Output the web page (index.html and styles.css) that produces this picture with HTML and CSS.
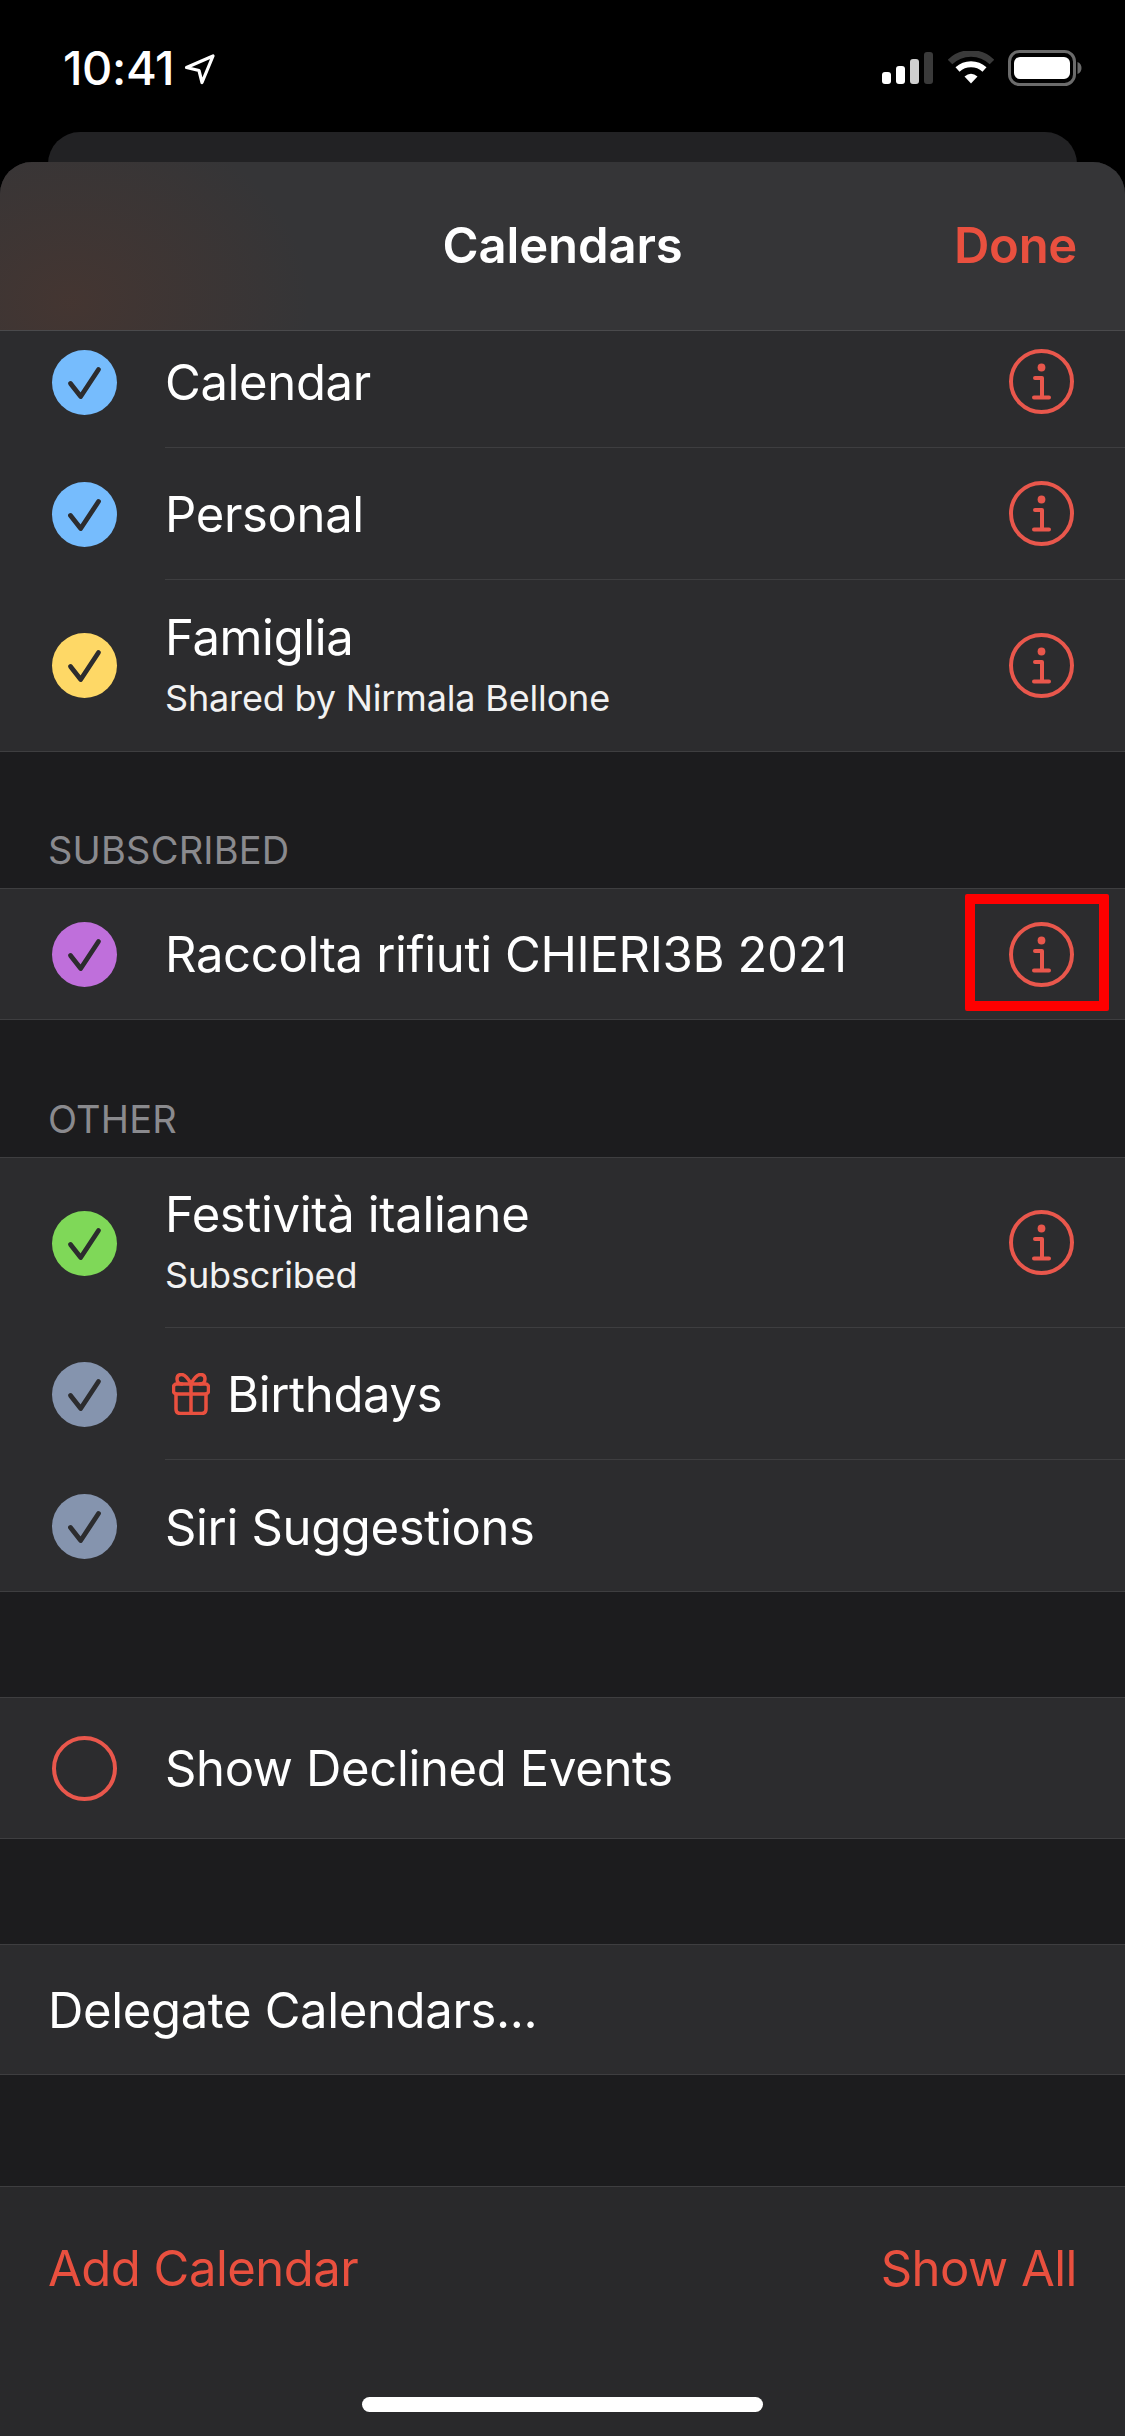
FILE: index.html
```html
<!DOCTYPE html>
<html lang="en">
<head>
<meta charset="utf-8">
<title>Calendars</title>
<link rel="stylesheet" href="styles.css">
</head>
<body>
<svg class="defs" width="0" height="0" aria-hidden="true">
  <symbol id="check" viewBox="0 0 65 65"><path d="M18.500 33.500 L28.700 46.500 L46.500 19.500" fill="none" stroke="#2c2c2e" stroke-width="4.800" stroke-linecap="round" stroke-linejoin="round"/></symbol>
  <symbol id="info" viewBox="0 0 65 65">
    <circle cx="32.500" cy="32.500" r="30.500" fill="none" stroke="currentColor" stroke-width="4"/>
    <circle cx="32.500" cy="18.500" r="3.900" fill="currentColor"/>
    <path d="M26 29 H33 V48 M25 48.500 H40" fill="none" stroke="currentColor" stroke-width="4" stroke-linecap="round" stroke-linejoin="round"/>
  </symbol>
</svg>
<div class="screen">
  <header class="status">
    <div class="status-left">
      <span class="time">10:41</span>
      <svg class="loc" width="32" height="32" viewBox="0 0 32 32"><path d="M2.500 14.500 L29 3 L18 29.500 L15 17.500 Z" fill="none" stroke="#fff" stroke-width="3.200" stroke-linejoin="round"/></svg>
    </div>
    <div class="status-right">
      <svg width="52" height="34" viewBox="0 0 52 34">
        <rect x="0" y="21" width="9" height="12" rx="3" fill="#fff"/>
        <rect x="14" y="15" width="9" height="18" rx="3" fill="#fff"/>
        <rect x="28" y="8" width="9" height="25" rx="3" fill="#cfcfcf"/>
        <rect x="42" y="1" width="9" height="32" rx="3" fill="#3a3a3a"/>
      </svg>
      <svg width="46" height="34" viewBox="0 0 46 34">
        <path d="M2 11 A30 30 0 0 1 44 11" fill="none" stroke="#3a3a3a" stroke-width="6.500"/>
        <path d="M9.500 18.500 A20 20 0 0 1 36.500 18.500" fill="none" stroke="#fff" stroke-width="6"/>
        <path d="M16.500 25.500 Q23 20 29.500 25.500 L23 32.500 Z" fill="#fff"/>
      </svg>
      <svg width="74" height="36" viewBox="0 0 74 36">
        <rect x="1.500" y="1.500" width="65" height="33" rx="10" fill="none" stroke="#6b6b6b" stroke-width="3"/>
        <rect x="6" y="7" width="56" height="22" rx="6" fill="#fff"/>
        <path d="M69.500 12 C72.500 13 73.500 15.500 73.500 18 C73.500 20.500 72.500 23 69.500 24 Z" fill="#6b6b6b"/>
      </svg>
    </div>
  </header>

  <div class="back-sheet"></div>

  <main class="sheet">
    <div class="nav">
      <h1 class="nav-title">Calendars</h1>
      <span class="nav-done">Done</span>
    </div>

    <div class="list">
      <section class="group group-first">
        <div class="row row-clipped">
          <div class="dot"><svg class="mark mark-blue"><use href="#check"/></svg></div>
          <div class="body"><span class="title">Calendar</span><svg class="info"><use href="#info"/></svg></div>
        </div>
        <div class="row">
          <div class="dot"><svg class="mark mark-blue"><use href="#check"/></svg></div>
          <div class="body"><span class="title">Personal</span><svg class="info"><use href="#info"/></svg></div>
        </div>
        <div class="row row-shared">
          <div class="dot"><svg class="mark mark-yellow"><use href="#check"/></svg></div>
          <div class="body">
            <div class="stack"><span class="title">Famiglia</span><span class="sub">Shared by Nirmala Bellone</span></div>
            <svg class="info"><use href="#info"/></svg>
          </div>
        </div>
      </section>

      <div class="label label-sub">SUBSCRIBED</div>
      <section class="group">
        <div class="row row-single">
          <div class="dot"><svg class="mark mark-purple"><use href="#check"/></svg></div>
          <div class="body"><span class="title">Raccolta rifiuti CHIERI3B 2021</span><svg class="info"><use href="#info"/></svg></div>
        </div>
      </section>

      <div class="label label-other">OTHER</div>
      <section class="group">
        <div class="row row-tall">
          <div class="dot"><svg class="mark mark-green"><use href="#check"/></svg></div>
          <div class="body">
            <div class="stack"><span class="title">Festività italiane</span><span class="sub">Subscribed</span></div>
            <svg class="info"><use href="#info"/></svg>
          </div>
        </div>
        <div class="row">
          <div class="dot"><svg class="mark mark-slate"><use href="#check"/></svg></div>
          <div class="body body-start">
            <svg class="gift" width="38" height="42" viewBox="0 0 38 42" fill="none" stroke="#e9503f" stroke-width="3.500" stroke-linejoin="round" stroke-linecap="round">
              <path d="M19 11 C15 3 12 1.500 9.500 1.500 C6.500 1.500 5 3.500 5 6 C5 9 7 11 10 11 M19 11 C23 3 26 1.500 28.500 1.500 C31.500 1.500 33 3.500 33 6 C33 9 31 11 28 11"/>
              <rect x="1.500" y="11" width="35" height="10" rx="3"/>
              <path d="M4 21 V36 Q4 40.500 8.500 40.500 H29.500 Q34 40.500 34 36 V21 M19 11 V40.500"/>
            </svg>
            <span class="title">Birthdays</span>
          </div>
        </div>
        <div class="row row-end">
          <div class="dot"><svg class="mark mark-slate"><use href="#check"/></svg></div>
          <div class="body"><span class="title">Siri Suggestions</span></div>
        </div>
      </section>

      <div class="gap"></div>
      <section class="group">
        <div class="row row-declined">
          <div class="dot"><span class="ring"></span></div>
          <div class="body"><span class="title">Show Declined Events</span></div>
        </div>
      </section>

      <div class="gap"></div>
      <section class="group">
        <div class="row row-plain">
          <span class="title">Delegate Calendars...</span>
        </div>
      </section>
    </div>

    <footer class="footer">
      <div class="toolbar">
        <span class="action">Add Calendar</span>
        <span class="action">Show All</span>
      </div>
      <div class="home"></div>
    </footer>
  </main>

  <div class="highlight"></div>
</div>
</body>
</html>
```

FILE: styles.css
```css
* { box-sizing: border-box; }
html, body { margin: 0; padding: 0; background: #000; }
.defs { position: absolute; }
.screen {
  position: relative;
  width: 1125px;
  height: 2436px;
  overflow: hidden;
  display: flex;
  flex-direction: column;
  background: #000;
  color: #fff;
  font-family: Inter, "Liberation Sans", sans-serif;
}
.status {
  flex: 0 0 132px;
  display: flex;
  justify-content: space-between;
  align-items: flex-start;
  padding: 50px 43px 0 63px;
}
.status-left { display: flex; align-items: center; gap: 10px; }
.time { font-size: 47px; line-height: 36px; font-weight: 500; letter-spacing: -0.4px; }
.loc { margin-top: 1px; }
.status-right { display: flex; align-items: center; gap: 14px; }

.back-sheet {
  flex: 0 0 60px;
  margin: 0 48px -30px;
  background: #222224;
  border-radius: 32px 32px 0 0;
}
.sheet {
  flex: 1;
  display: flex;
  flex-direction: column;
  min-height: 0;
  overflow: hidden;
  border-radius: 32px 32px 0 0;
  background: #1c1c1e;
}
.nav {
  position: relative;
  z-index: 1;
  flex: 0 0 169px;
  display: flex;
  align-items: center;
  justify-content: center;
  border-bottom: 1px solid #4a4a4c;
  background:
    radial-gradient(ellipse 240px 190px at 70px 140px, rgba(78, 54, 46, 0.6), rgba(78, 54, 46, 0)),
    #353537;
}
.nav-title { margin: 0; font-size: 49px; line-height: 60px; font-weight: 600; letter-spacing: -0.1px; }
.nav-done { position: absolute; right: 48px; top: 54px; font-size: 49px; line-height: 60px; font-weight: 600; letter-spacing: -0.3px; color: #e9503f; }

.list { flex: 1; min-height: 0; display: flex; flex-direction: column; }
.group {
  background: #2c2c2e;
  border-top: 1px solid #3e3e40;
  border-bottom: 1px solid #3e3e40;
}
.group-first { border-top: 0; }
.row { display: flex; height: 132px; }
.row-clipped { margin-top: -15px; }
.row-shared { height: 171px; }
.row-tall { height: 170px; }
.row-single { height: 130px; }
.row-end { height: 131px; padding-top: 2px; }
.row-declined { height: 140px; }
.row-plain { height: 129px; align-items: center; padding-left: 48px; }
.dot { flex: 0 0 165px; display: flex; align-items: center; padding-left: 52px; }
.mark { display: block; width: 65px; height: 65px; border-radius: 50%; }
.mark-blue { background: #76bcfd; }
.mark-yellow { background: #fed866; }
.mark-purple { background: #bf6fdb; }
.mark-green { background: #7fd858; }
.mark-slate { background: #8594ae; }
.ring { display: block; width: 65px; height: 65px; border-radius: 50%; border: 4px solid #e9574c; }
.body {
  flex: 1;
  min-width: 0;
  display: flex;
  align-items: center;
  justify-content: space-between;
  padding-right: 51px;
  border-bottom: 1px solid #3e3e40;
}
.row:last-child .body { border-bottom: 0; }
.body-start { justify-content: flex-start; padding-left: 7px; gap: 17px; }
.title { padding-top: 2px; font-size: 49px; line-height: 60px; font-weight: 400; letter-spacing: -0.35px; color: #fff; }
.stack { display: flex; flex-direction: column; margin-bottom: 4px; }
.stack .title { padding-top: 0; }
.sub { font-size: 36px; line-height: 44px; letter-spacing: -0.16px; color: #f2f2f2; margin-top: 8px; }
.info { display: block; width: 65px; height: 65px; color: #e9574c; }
.gift { flex: none; }
.label {
  display: flex;
  align-items: flex-end;
  padding: 0 0 16px 48px;
  font-size: 38px;
  line-height: 44px;
  letter-spacing: 0.2px;
  color: #8a8a8e;
}
.label-sub { flex: 0 0 136px; }
.label-other { flex: 0 0 137px; }
.gap { flex: 0 0 105px; }

.footer {
  flex: 0 0 250px;
  display: flex;
  flex-direction: column;
  background: #29292b;
  border-top: 1px solid #3e3e40;
}
.toolbar {
  flex: 0 0 163px;
  display: flex;
  align-items: center;
  justify-content: space-between;
  padding: 0 48px;
}
.action { font-size: 49px; line-height: 60px; letter-spacing: -0.5px; color: #e9503f; }
.home {
  width: 401px;
  height: 15px;
  margin: 47px auto 0;
  border-radius: 8px;
  background: #fff;
}
.highlight {
  position: absolute;
  left: 965px;
  top: 894px;
  width: 144px;
  height: 117px;
  border: 10px solid #fe0000;
  border-radius: 2px;
}
```
